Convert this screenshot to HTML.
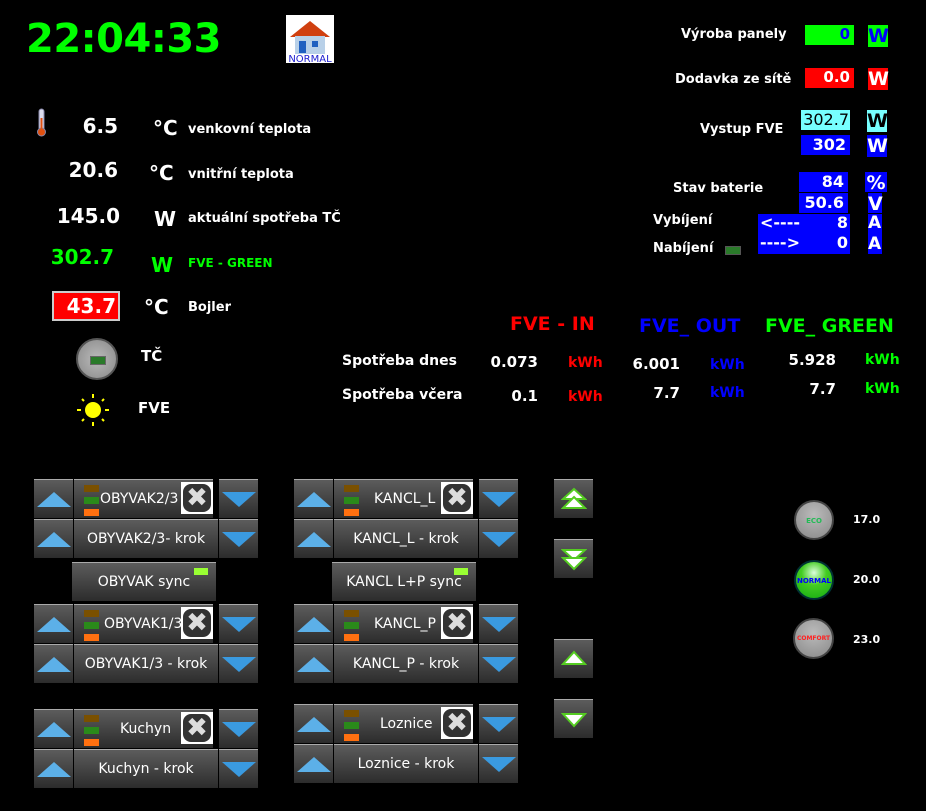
<!DOCTYPE html><html><head><meta charset="utf-8"><style>
body{margin:0;width:926px;height:811px;background:#000;position:relative;overflow:hidden;font-family:"DejaVu Sans","Liberation Sans",sans-serif;font-weight:bold;color:#fff}
.a{position:absolute;white-space:nowrap}
.r{text-align:right}
.b{position:absolute;box-sizing:border-box;background:linear-gradient(#5c5c5c,#2c2c2c);border-top:1px solid #aaa;color:#fff;font:14px "DejaVu Sans",sans-serif;display:flex;align-items:center;justify-content:center;height:39px}
.up{width:0;height:0;border-left:17px solid transparent;border-right:17px solid transparent;border-bottom:15px solid #5cb0e8}
.dn{width:0;height:0;border-left:17px solid transparent;border-right:17px solid transparent;border-top:15px solid #3a9ae0}
.x{position:absolute;width:32px;height:32px;background:#fff;top:2px;right:0}
.x div{position:absolute;left:2px;top:2px;width:28px;height:28px;border-radius:8px;background:#333;color:#ddd;font-size:26px;line-height:28px;text-align:center}
.led{position:absolute;left:10px;width:15px;height:7px}
.bx{position:absolute;box-sizing:border-box;text-align:right;padding-right:4px}
</style></head><body>
<div class="a" style="left:26px;top:16px;font-size:40px;color:#0f0;letter-spacing:-0.5px">22:04:33</div>
<div class="a" style="left:286px;top:15px;width:48px;height:48px;background:#fff">
<svg width="48" height="48"><polygon points="4,22 24,6 44,22" fill="#d04010"/><rect x="9" y="21" width="30" height="18" fill="#b8d0e8"/><rect x="13" y="26" width="7" height="12" fill="#2060c0"/><rect x="26" y="26" width="6" height="6" fill="#2060c0"/><text x="24" y="47" font-size="10" fill="#2020d0" text-anchor="middle" font-family="DejaVu Sans" font-weight="normal">NORMAL</text></svg></div>
<svg class="a" style="left:36px;top:108px" width="12" height="30"><rect x="3" y="1" width="5" height="22" rx="2.5" fill="#dde" stroke="#88a"/><circle cx="5.5" cy="24" r="4" fill="#e05010" stroke="#88a"/><rect x="4.5" y="10" width="2" height="12" fill="#e05010"/></svg>
<div class="a r" style="left:40px;top:114px;width:78px;font-size:20px">6.5</div>
<div class="a" style="left:153px;top:116px;font-size:20px">°C</div>
<div class="a" style="left:188px;top:122px;font-size:13px">venkovní teplota</div>
<div class="a r" style="left:40px;top:158px;width:78px;font-size:20px">20.6</div>
<div class="a" style="left:149px;top:161px;font-size:20px">°C</div>
<div class="a" style="left:188px;top:167px;font-size:13px">vnitřní teplota</div>
<div class="a r" style="left:40px;top:204px;width:80px;font-size:20px">145.0</div>
<div class="a" style="left:154px;top:207px;font-size:20px">W</div>
<div class="a" style="left:188px;top:211px;font-size:13px">aktuální spotřeba TČ</div>
<div class="a r" style="left:40px;top:245px;width:74px;font-size:20px;color:#0f0">302.7</div>
<div class="a" style="left:151px;top:253px;font-size:20px;color:#0f0">W</div>
<div class="a" style="left:188px;top:256px;font-size:12px;color:#0f0">FVE - GREEN</div>
<div class="a r" style="left:52px;top:291px;width:68px;height:30px;box-sizing:border-box;border:2px solid #ccc;background:#f00;font-size:20px;padding-right:2px;line-height:26px">43.7</div>
<div class="a" style="left:144px;top:295px;font-size:20px">°C</div>
<div class="a" style="left:188px;top:300px;font-size:13px">Bojler</div>
<div class="a" style="left:76px;top:338px;width:42px;height:42px;border-radius:50%;background:radial-gradient(#bbb,#888);border:2px solid #555;box-sizing:border-box"><div style="position:absolute;left:12px;top:16px;width:14px;height:7px;background:#2a7a2a;border:1px solid #666"></div></div>
<div class="a" style="left:141px;top:347px;font-size:15px">TČ</div>
<svg class="a" style="left:76px;top:393px" width="34" height="34"><circle cx="17" cy="17" r="8" fill="#ff0"/><g stroke="#ff0" stroke-width="2"><line x1="17" y1="1" x2="17" y2="5"/><line x1="17" y1="29" x2="17" y2="33"/><line x1="1" y1="17" x2="5" y2="17"/><line x1="29" y1="17" x2="33" y2="17"/><line x1="6" y1="6" x2="8" y2="8"/><line x1="26" y1="26" x2="28" y2="28"/><line x1="28" y1="6" x2="26" y2="8"/><line x1="6" y1="28" x2="8" y2="26"/></g></svg>
<div class="a" style="left:138px;top:399px;font-size:15px">FVE</div>

<div class="a" style="left:681px;top:27px;font-size:13px">Výroba panely</div>
<div class="bx a" style="left:805px;top:25px;width:49px;height:20px;background:#0f0;color:#00f;font-size:15px">0</div>
<div class="a" style="left:868px;top:25px;width:20px;height:22px;background:#0f0;color:#00f;font-size:19px;text-align:center">W</div>
<div class="a" style="left:675px;top:72px;font-size:13px">Dodavka ze sítě</div>
<div class="bx a" style="left:805px;top:68px;width:49px;height:20px;background:#f00;font-size:15px">0.0</div>
<div class="a" style="left:868px;top:68px;width:20px;height:22px;background:#f00;font-size:19px;text-align:center">W</div>
<div class="a" style="left:700px;top:122px;font-size:13px">Vystup FVE</div>
<div class="bx a" style="left:801px;top:110px;width:49px;height:20px;background:#7ff;color:#000;font-size:16px;font-weight:normal;padding-right:1px">302.7</div>
<div class="a" style="left:867px;top:110px;width:20px;height:22px;background:#7ff;color:#000;font-size:19px;text-align:center">W</div>
<div class="bx a" style="left:801px;top:135px;width:49px;height:20px;background:#00f;font-size:16px">302</div>
<div class="a" style="left:867px;top:135px;width:20px;height:22px;background:#00f;font-size:19px;text-align:center">W</div>
<div class="a" style="left:673px;top:181px;font-size:13px">Stav baterie</div>
<div class="bx a" style="left:799px;top:172px;width:49px;height:20px;background:#00f;font-size:16px">84</div>
<div class="a" style="left:865px;top:172px;width:22px;height:20px;background:#00f;font-size:19px;text-align:center">%</div>
<div class="bx a" style="left:799px;top:193px;width:49px;height:20px;background:#00f;font-size:16px">50.6</div>
<div class="a" style="left:868px;top:193px;width:14px;height:20px;background:#00f;font-size:19px;text-align:center">V</div>
<div class="a" style="left:653px;top:213px;font-size:13px">Vybíjení</div>
<div class="a" style="left:758px;top:214px;width:50px;height:40px;background:#00f"></div>
<div class="bx a" style="left:808px;top:214px;width:42px;height:40px;background:#00f"></div>
<div class="a" style="left:760px;top:213px;font-size:16px">&lt;----</div>
<div class="a r" style="left:800px;top:213px;width:48px;font-size:16px">8</div>
<div class="a" style="left:760px;top:233px;font-size:16px">----&gt;</div>
<div class="a r" style="left:800px;top:233px;width:48px;font-size:16px">0</div>
<div class="a" style="left:868px;top:214px;width:14px;height:40px;background:#00f"></div>
<div class="a" style="left:868px;top:213px;font-size:17px">A</div>
<div class="a" style="left:868px;top:234px;font-size:17px">A</div>
<div class="a" style="left:653px;top:241px;font-size:13px">Nabíjení</div>
<div class="a" style="left:725px;top:246px;width:14px;height:7px;background:#2a7a2a;border:1px solid #555"></div>

<div class="a" style="left:510px;top:313px;font-size:19px;color:#f00">FVE - IN</div>
<div class="a" style="left:639px;top:315px;font-size:19px;color:#00f">FVE_ OUT</div>
<div class="a" style="left:765px;top:315px;font-size:19px;color:#0f0">FVE_ GREEN</div>
<div class="a" style="left:342px;top:353px;font-size:14px">Spotřeba dnes</div>
<div class="a r" style="left:470px;top:353px;width:68px;font-size:15px">0.073</div>
<div class="a" style="left:568px;top:355px;font-size:14px;color:#f00">kWh</div>
<div class="a r" style="left:610px;top:355px;width:70px;font-size:15px">6.001</div>
<div class="a" style="left:710px;top:357px;font-size:14px;color:#00f">kWh</div>
<div class="a r" style="left:766px;top:351px;width:70px;font-size:15px">5.928</div>
<div class="a" style="left:865px;top:352px;font-size:14px;color:#0f0">kWh</div>
<div class="a" style="left:342px;top:387px;font-size:14px">Spotřeba včera</div>
<div class="a r" style="left:470px;top:387px;width:68px;font-size:15px">0.1</div>
<div class="a" style="left:568px;top:389px;font-size:14px;color:#f00">kWh</div>
<div class="a r" style="left:610px;top:384px;width:70px;font-size:15px">7.7</div>
<div class="a" style="left:710px;top:385px;font-size:14px;color:#00f">kWh</div>
<div class="a r" style="left:766px;top:380px;width:70px;font-size:15px">7.7</div>
<div class="a" style="left:865px;top:381px;font-size:14px;color:#0f0">kWh</div>

<div class="b" style="left:34px;top:479px;width:39px"><div class="up"></div></div>
<div class="b" style="left:74px;top:479px;width:139px;justify-content:flex-start;padding-left:26px">OBYVAK2/3<div class="led" style="top:5px;background:#7a5000"></div><div class="led" style="top:17px;background:#2a8a1a"></div><div class="led" style="top:29px;background:#ff7010"></div><div class="x"><div>✖</div></div></div>
<div class="b" style="left:219px;top:479px;width:39px"><div class="dn"></div></div>
<div class="b" style="left:34px;top:519px;width:39px"><div class="up"></div></div>
<div class="b" style="left:74px;top:519px;width:144px">OBYVAK2/3- krok</div>
<div class="b" style="left:219px;top:519px;width:39px"><div class="dn"></div></div>
<div class="b" style="left:72px;top:562px;width:144px">OBYVAK sync<div style="position:absolute;right:8px;top:5px;width:14px;height:7px;background:#9f3"></div></div>
<div class="b" style="left:34px;top:604px;width:39px"><div class="up"></div></div>
<div class="b" style="left:74px;top:604px;width:139px;justify-content:flex-start;padding-left:30px">OBYVAK1/3<div class="led" style="top:5px;background:#7a5000"></div><div class="led" style="top:17px;background:#2a8a1a"></div><div class="led" style="top:29px;background:#ff7010"></div><div class="x"><div>✖</div></div></div>
<div class="b" style="left:219px;top:604px;width:39px"><div class="dn"></div></div>
<div class="b" style="left:34px;top:644px;width:39px"><div class="up"></div></div>
<div class="b" style="left:74px;top:644px;width:144px">OBYVAK1/3 - krok</div>
<div class="b" style="left:219px;top:644px;width:39px"><div class="dn"></div></div>
<div class="b" style="left:34px;top:709px;width:39px"><div class="up"></div></div>
<div class="b" style="left:74px;top:709px;width:139px;justify-content:flex-start;padding-left:46px">Kuchyn<div class="led" style="top:5px;background:#7a5000"></div><div class="led" style="top:17px;background:#2a8a1a"></div><div class="led" style="top:29px;background:#ff7010"></div><div class="x"><div>✖</div></div></div>
<div class="b" style="left:219px;top:709px;width:39px"><div class="dn"></div></div>
<div class="b" style="left:34px;top:749px;width:39px"><div class="up"></div></div>
<div class="b" style="left:74px;top:749px;width:144px">Kuchyn - krok</div>
<div class="b" style="left:219px;top:749px;width:39px"><div class="dn"></div></div>

<div class="b" style="left:294px;top:479px;width:39px"><div class="up"></div></div>
<div class="b" style="left:334px;top:479px;width:139px;justify-content:flex-start;padding-left:40px">KANCL_L<div class="led" style="top:5px;background:#7a5000"></div><div class="led" style="top:17px;background:#2a8a1a"></div><div class="led" style="top:29px;background:#ff7010"></div><div class="x"><div>✖</div></div></div>
<div class="b" style="left:479px;top:479px;width:39px"><div class="dn"></div></div>
<div class="b" style="left:294px;top:519px;width:39px"><div class="up"></div></div>
<div class="b" style="left:334px;top:519px;width:144px">KANCL_L - krok</div>
<div class="b" style="left:479px;top:519px;width:39px"><div class="dn"></div></div>
<div class="b" style="left:332px;top:562px;width:144px">KANCL L+P sync<div style="position:absolute;right:8px;top:5px;width:14px;height:7px;background:#9f3"></div></div>
<div class="b" style="left:294px;top:604px;width:39px"><div class="up"></div></div>
<div class="b" style="left:334px;top:604px;width:139px;justify-content:flex-start;padding-left:40px">KANCL_P<div class="led" style="top:5px;background:#7a5000"></div><div class="led" style="top:17px;background:#2a8a1a"></div><div class="led" style="top:29px;background:#ff7010"></div><div class="x"><div>✖</div></div></div>
<div class="b" style="left:479px;top:604px;width:39px"><div class="dn"></div></div>
<div class="b" style="left:294px;top:644px;width:39px"><div class="up"></div></div>
<div class="b" style="left:334px;top:644px;width:144px">KANCL_P - krok</div>
<div class="b" style="left:479px;top:644px;width:39px"><div class="dn"></div></div>
<div class="b" style="left:294px;top:704px;width:39px"><div class="up"></div></div>
<div class="b" style="left:334px;top:704px;width:139px;justify-content:flex-start;padding-left:46px">Loznice<div class="led" style="top:5px;background:#7a5000"></div><div class="led" style="top:17px;background:#2a8a1a"></div><div class="led" style="top:29px;background:#ff7010"></div><div class="x"><div>✖</div></div></div>
<div class="b" style="left:479px;top:704px;width:39px"><div class="dn"></div></div>
<div class="b" style="left:294px;top:744px;width:39px"><div class="up"></div></div>
<div class="b" style="left:334px;top:744px;width:144px">Loznice - krok</div>
<div class="b" style="left:479px;top:744px;width:39px"><div class="dn"></div></div>

<div class="b" style="left:554px;top:479px;width:39px"><svg width="26" height="24"><polygon points="13,2 24,12 2,12" fill="#fff" stroke="#5c2" stroke-width="2"/><polygon points="13,10 24,21 2,21" fill="#fff" stroke="#5c2" stroke-width="2"/></svg></div>
<div class="b" style="left:554px;top:539px;width:39px"><svg width="26" height="24"><polygon points="2,3 24,3 13,13" fill="#fff" stroke="#5c2" stroke-width="2"/><polygon points="2,11 24,11 13,22" fill="#fff" stroke="#5c2" stroke-width="2"/></svg></div>
<div class="b" style="left:554px;top:639px;width:39px"><svg width="26" height="20"><polygon points="13,3 24,15 2,15" fill="#fff" stroke="#5c2" stroke-width="2"/></svg></div>
<div class="b" style="left:554px;top:699px;width:39px"><svg width="26" height="20"><polygon points="2,5 24,5 13,17" fill="#fff" stroke="#5c2" stroke-width="2"/></svg></div>

<div class="a" style="left:794px;top:500px;width:40px;height:40px;border-radius:50%;background:radial-gradient(circle at 50% 35%,#bbb,#888);border:2px solid #444;box-sizing:border-box;font-size:7px;color:#2b5;text-align:center;line-height:38px">ECO</div>
<div class="a" style="left:853px;top:513px;font-size:11px">17.0</div>
<div class="a" style="left:794px;top:560px;width:40px;height:40px;border-radius:50%;background:radial-gradient(circle at 50% 30%,#dfd,#4c2 40%,#1a1);border:2px solid #033;box-sizing:border-box;font-size:7px;color:#00f;text-align:center;line-height:38px">NORMAL</div>
<div class="a" style="left:853px;top:573px;font-size:11px">20.0</div>
<div class="a" style="left:793px;top:618px;width:41px;height:41px;border-radius:50%;background:radial-gradient(circle at 50% 35%,#bbb,#888);border:2px solid #444;box-sizing:border-box;font-size:6px;color:#f22;text-align:center;line-height:38px">COMFORT</div>
<div class="a" style="left:853px;top:633px;font-size:11px">23.0</div>
</body></html>
